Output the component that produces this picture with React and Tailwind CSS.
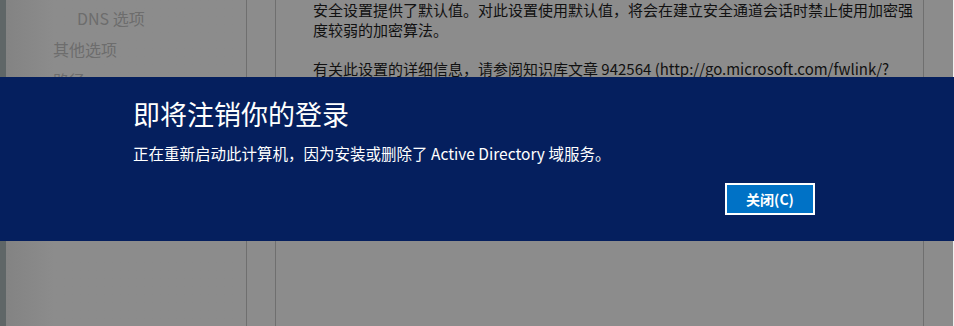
export default function App() {
    const cjk = { fontFamily: '"Noto Sans CJK SC", "Noto Sans", sans-serif' };

    return (
        <div className="relative w-[954px] h-[326px] overflow-hidden bg-[#8c8c8c]" style={cjk}>
            {/* Dimmed window behind the banner */}
            <div className="flex h-full">
                <div className="w-[6px] bg-[#5f6667]" />
                <div className="w-[240px] bg-gradient-to-r from-[#838383] to-[#8c8c8c] from-0% to-[20%] text-[#6d6d6d] text-[16px]">
                    <div className="pl-[71px] h-[31px] leading-[36px]">DNS 选项</div>
                    <div className="pl-[47px] h-[31px] leading-[36px]">其他选项</div>
                    <div className="pl-[47px] h-[31px] leading-[36px]">路径</div>
                </div>
                <div className="w-[29px] border-l border-[#6f6f6f]" />
                <div className="w-[648px] border-l border-[#6f6f6f] pl-[37px] text-[15px] leading-[19.5px] text-[#111]">
                    <p>安全设置提供了默认值。对此设置使用默认值，将会在建立安全通道会话时禁止使用加密强</p>
                    <p>度较弱的加密算法。</p>
                    <p className="mt-[19.5px] whitespace-nowrap">有关此设置的详细信息，请参阅知识库文章 942564 (http://go.microsoft.com/fwlink/?</p>
                </div>
                <div className="w-[30px] border-l border-[#6f6f6f]" />
                <div className="flex-1 bg-[#f0f0f0]" />
            </div>

            {/* Sign-out notice banner */}
            <div className="absolute left-0 top-[77px] w-full h-[164px] bg-[#051f5e] text-white">
                <div className="ml-[133px] w-[682px] flex flex-col">
                    <h1 className="mt-[19px] text-[27px] font-normal leading-[36px]">即将注销你的登录</h1>
                    <p className="mt-[11px] text-[15.5px] leading-[20px]">正在重新启动此计算机，因为安装或删除了 Active Directory 域服务。</p>
                    <div className="flex justify-end mt-[20px]">
                        <button className="w-[90px] h-[32px] border-2 border-white bg-[#0072c6] text-[14px] font-bold text-white leading-none">
                            关闭(C)
                        </button>
                    </div>
                </div>
            </div>
        </div>
    );
}
